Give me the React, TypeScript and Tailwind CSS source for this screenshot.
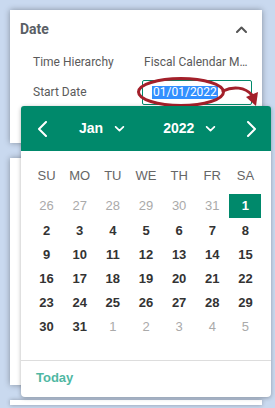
import React from 'react';

const weekDays = ['SU', 'MO', 'TU', 'WE', 'TH', 'FR', 'SA'];

type Day = { n: number; muted?: boolean; selected?: boolean };

const buildDays = (): Day[] => {
  const days: Day[] = [];
  [26, 27, 28, 29, 30, 31].forEach((n) => days.push({ n, muted: true }));
  for (let n = 1; n <= 31; n++) days.push({ n, selected: n === 1 });
  [1, 2, 3, 4, 5].forEach((n) => days.push({ n, muted: true }));
  return days;
};

const Chevron = ({ dir, className }: { dir: 'left' | 'right' | 'down' | 'up'; className?: string }) => {
  const paths: Record<string, string> = {
    left: 'M9 1 L2 8 L9 15',
    right: 'M2 1 L9 8 L2 15',
    down: 'M1 1 L5.5 5.5 L10 1',
    up: 'M1 6 L5.5 1.5 L10 6',
  };
  const vb = dir === 'left' || dir === 'right' ? '0 0 11 16' : '0 0 11 7';
  return (
    <svg viewBox={vb} className={className} fill="none" stroke="currentColor" strokeWidth={2} strokeLinecap="round" strokeLinejoin="round">
      <path d={paths[dir]} />
    </svg>
  );
};

const DatePopup = () => {
  const days = buildDays();
  return (
    <div className="absolute left-[21px] top-[106px] flex h-[291px] w-[250px] flex-col rounded-[4px] bg-white shadow-[0_1px_4px_rgba(0,0,0,0.3)] font-['Liberation_Sans',Arial,sans-serif]">
      {/* Month / year header */}
      <div className="flex h-[45px] items-center rounded-t-[3px] bg-[#00896b] text-white">
        <Chevron dir="left" className="ml-[16px] h-[16px] w-[11px]" />
        <div className="ml-[31px] flex items-center">
          <span className="text-[14px] font-bold">Jan</span>
          <Chevron dir="down" className="ml-[11px] h-[6px] w-[11px]" />
        </div>
        <div className="ml-[38px] flex items-center">
          <span className="text-[14px] font-bold">2022</span>
          <Chevron dir="down" className="ml-[11px] h-[6px] w-[11px]" />
        </div>
        <Chevron dir="right" className="ml-[30px] h-[16px] w-[11px]" />
      </div>

      {/* Weekdays */}
      <div className="mt-[13px] grid grid-cols-7 px-[9px]">
        {weekDays.map((d) => (
          <div key={d} className="flex h-[24px] items-center justify-center text-[13px] text-[#666]">
            {d}
          </div>
        ))}
      </div>

      {/* Days */}
      <div className="mt-[6px] grid grid-cols-7 px-[9px]">
        {days.map((d, i) => (
          <div key={i} className="flex h-[24.2px] items-center justify-center">
            {d.selected ? (
              <span className="flex h-[24px] w-[32px] items-center justify-center bg-[#00896b] text-[13px] font-bold text-white">
                {d.n}
              </span>
            ) : (
              <span className={d.muted ? 'text-[13px] text-[#aaa]' : 'text-[13px] font-bold text-[#333]'}>{d.n}</span>
            )}
          </div>
        ))}
      </div>

      <div className="mt-auto border-t border-[#ddd]">
        <div className="flex h-[36px] items-center pl-[15px] pb-[2px] text-[13px] font-bold text-[#4fb8a3]">Today</div>
      </div>
    </div>
  );
};

const Annotation = () => (
  <svg className="pointer-events-none absolute left-0 top-0" width={275} height={140} viewBox="0 0 275 140" fill="none">
    <ellipse cx={181} cy={92} rx={42.5} ry={13.5} stroke="#a3202a" strokeWidth={3} />
    <path d="M223 91 C233 86, 245 87, 252 95" stroke="#a3202a" strokeWidth={3} strokeLinecap="round" />
    <path d="M246 97 L258 92 L256 106 Z" fill="#a3202a" />
  </svg>
);

export default function App() {
  return (
    <div className="relative h-[408px] w-[275px] overflow-hidden bg-[#c9d9ef] font-['Roboto','Liberation_Sans',sans-serif]">
      <div className="flex flex-col pl-[10px] pr-[13px] pt-[10px]">
        <section className="h-[133px] bg-white shadow-[0_0_6px_rgba(0,0,0,0.35)]">
          <div className="mt-[9px] flex h-[20px] items-center justify-between pl-[10px] pr-[15px]">
            <span className="text-[14px] font-bold text-[#5b5f66]">Date</span>
            <Chevron dir="up" className="h-[7px] w-[11px] text-[#555]" />
          </div>
          <div className="mt-[8px] flex h-[30px] items-center pl-[23px] text-[12px] text-[#5a5a5a]">
            <span className="w-[111px]">Time Hierarchy</span>
            <span className="w-[105px] truncate">Fiscal Calendar Month</span>
          </div>
          <div className="flex h-[30px] items-center pl-[23px] text-[12px] text-[#5a5a5a]">
            <span className="w-[109px]">Start Date</span>
            <div className="flex h-[25px] w-[110px] items-center rounded-[2px] border border-[#00896b] pl-[9px]">
              <span className="bg-[#3390ff] px-[1px] text-[12px] leading-[13px] text-white">01/01/2022</span>
            </div>
          </div>
        </section>
        <section className="mt-[15px] h-[227px] bg-white shadow-[0_0_6px_rgba(0,0,0,0.35)]" />
        <section className="mt-[15px] h-[5px] bg-white shadow-[0_0_4px_rgba(0,0,0,0.3)]" />
      </div>
      <Annotation />
      <DatePopup />
    </div>
  );
}
